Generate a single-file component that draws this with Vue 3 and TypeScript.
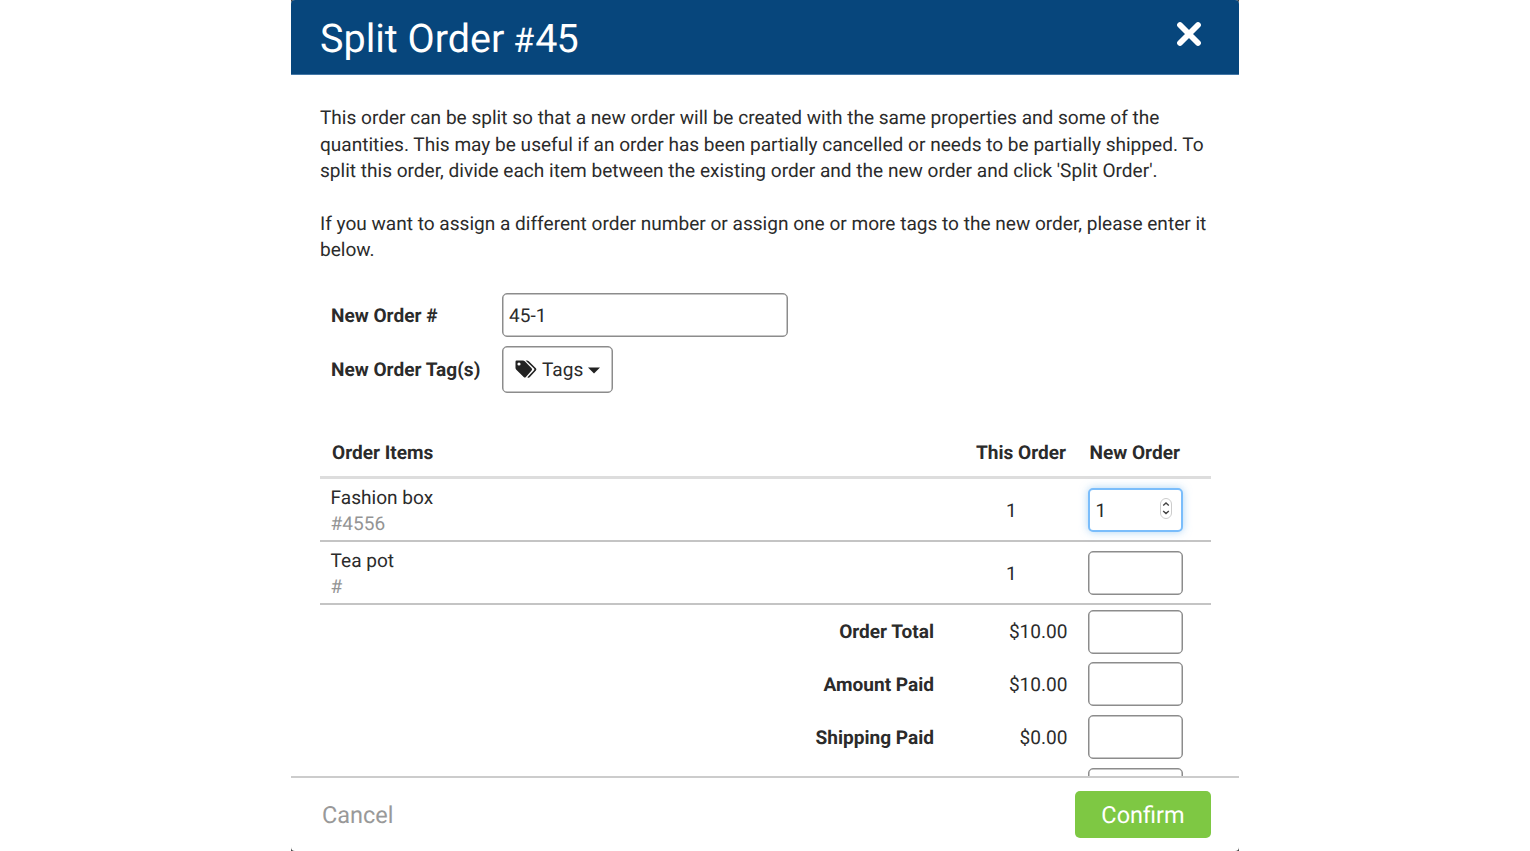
<script setup lang="ts">
import { ref } from 'vue'

interface Item {
  name: string
  sku: string
  quantity: number
}

interface Total {
  label: string
  amount: string
}

const orderNumber = ref('45-1')
const intro: string[] = [
  'This order can be split so that a new order will be created with the same properties and some of the',
  'quantities. This may be useful if an order has been partially cancelled or needs to be partially shipped. To',
  "split this order, divide each item between the existing order and the new order and click 'Split Order'.",
]
const hint: string[] = [
  'If you want to assign a different order number or assign one or more tags to the new order, please enter it',
  'below.',
]
const items: Item[] = [
  { name: 'Fashion box', sku: '#4556', quantity: 1 },
  { name: 'Tea pot', sku: '#', quantity: 1 },
]
const newQuantities = ref<string[]>(['1', ''])
const totals: Total[] = [
  { label: 'Order Total', amount: '$10.00' },
  { label: 'Amount Paid', amount: '$10.00' },
  { label: 'Shipping Paid', amount: '$0.00' },
  { label: '', amount: '' },
]
const newTotals = ref<string[]>(['', '', '', ''])
</script>

<template>
  <div class="stage">
    <section class="modal" role="dialog" aria-labelledby="title">
      <header class="head">
        <h1 id="title">Split Order <span class="order-id"><span class="hash">#</span>45</span></h1>
        <button class="close" aria-label="Close">
          <svg width="26" height="26" viewBox="0 0 26 26">
            <path d="M4 4 L22 22 M22 4 L4 22" />
          </svg>
        </button>
      </header>

      <div class="body">
        <p><span v-for="line in intro" :key="line" class="line">{{ line }}</span></p>
        <p><span v-for="line in hint" :key="line" class="line">{{ line }}</span></p>

        <div class="form">
          <label for="number">New Order #</label>
          <input id="number" v-model="orderNumber" class="field" type="text" />
          <span class="label">New Order Tag(s)</span>
          <button class="tags">
            <svg class="tag-icon" width="22" height="19" viewBox="0 0 22 19">
              <path
                fill-rule="evenodd"
                d="M1.6 0.5 H8 Q9 0.5 9.8 1.3 L16.6 8.3 Q17.6 9.4 16.6 10.5 L10.9 17 Q9.8 18.1 8.7 17 L1.3 9.7 Q0.5 8.9 0.5 8 V1.7 Q0.5 0.5 1.6 0.5 Z M4 2.4 A1.6 1.6 0 1 0 4 5.6 A1.6 1.6 0 1 0 4 2.4 Z"
              />
              <path d="M10.6 0.5 H12 Q13 0.5 13.8 1.3 L20.9 8.3 Q21.9 9.4 20.9 10.5 L14.9 17 Q13.7 18.3 12.4 17.2 L19 10.2 Q19.8 9.4 19 8.5 Z" />
            </svg>
            <span>Tags</span>
            <svg class="caret" width="12" height="7" viewBox="0 0 12 7"><path d="M0 0.4 H12 L6 6.6 Z" /></svg>
          </button>
        </div>

        <div class="table">
          <div class="row columns">
            <span>Order Items</span>
            <span>This Order</span>
            <span>New Order</span>
          </div>
          <div v-for="(item, i) in items" :key="item.sku" class="row item">
            <div class="product">
              <div>{{ item.name }}</div>
              <div class="sku">{{ item.sku }}</div>
            </div>
            <span class="quantity">{{ item.quantity }}</span>
            <div class="amount-field" :class="{ focused: i === 0 }">
              <input v-model="newQuantities[i]" type="text" />
              <svg v-if="i === 0" width="12" height="21" viewBox="0 0 12 21">
                <rect x="0.5" y="0.5" width="11" height="20" rx="5.5" />
                <path d="M3.2 7.6 L6 5 L8.8 7.6 M3.2 13 L6 15.6 L8.8 13" />
              </svg>
            </div>
          </div>
          <div v-for="(total, i) in totals" :key="total.label" class="total">
            <span class="total-label">{{ total.label }}</span>
            <span class="money">{{ total.amount }}</span>
            <div class="amount-field"><input v-model="newTotals[i]" type="text" /></div>
          </div>
        </div>
      </div>

      <footer class="foot">
        <button class="cancel">Cancel</button>
        <button class="confirm">Confirm</button>
      </footer>
    </section>
  </div>
</template>

<style>
body {
  margin: 0;
  overflow: hidden;
  background: #fff;
}
</style>

<style scoped>
* {
  box-sizing: border-box;
}
.stage {
  width: 948px;
  height: 851px;
  margin-left: 291px;
  background: #444;
}
.modal {
  display: flex;
  flex-direction: column;
  height: 100%;
  overflow: hidden;
  border-radius: 4px;
  background: #fff;
  color: #2b2b2b;
  font-family: Roboto, "Liberation Sans", sans-serif;
  font-size: 19.07px;
  line-height: 26.4px;
  text-rendering: geometricPrecision;
}
button,
input {
  padding: 0;
  color: inherit;
  font: inherit;
  text-rendering: inherit;
}
.head {
  display: flex;
  flex: none;
  justify-content: space-between;
  height: 75px;
  padding: 0 37px 0 29px;
  border-bottom: 1px solid #4377a6;
  background: #07467c;
  color: #fff;
}
h1 {
  margin: 0;
  font-size: 39.5px;
  font-weight: 400;
  line-height: 77px;
}
.order-id {
  margin-left: -1px;
  letter-spacing: -0.8px;
}
.hash {
  display: inline-block;
  width: 22px;
  font-size: 34px;
}
.close {
  width: 26px;
  height: 26px;
  margin-top: 21px;
  border: 0;
  background: none;
}
.close svg {
  display: block;
  fill: none;
  stroke: #fff;
  stroke-width: 5.8;
  stroke-linecap: round;
}
.body {
  flex: 1;
  min-height: 0;
  padding: 30.3px 28px 0 29px;
  overflow: hidden;
}
p {
  margin: 0 0 26.4px;
}
.line {
  display: block;
  white-space: nowrap;
}
.form {
  display: grid;
  grid-template-columns: 171px auto;
  grid-template-rows: 44px 47px;
  row-gap: 9px;
  align-items: center;
  justify-content: start;
  margin-top: 29.5px;
  padding-left: 11px;
}
label,
.label {
  padding-top: 2px;
  font-weight: 700;
}
.label {
  padding-top: 1px;
}
.field {
  width: 286px;
  height: 44px;
  padding: 1px 6px 0;
  border: 1px solid #8c8c8c;
  border-radius: 5px;
  background: #fff;
  box-shadow: inset 0 0 0 0.5px #8c8c8c;
}
.tags {
  display: flex;
  align-items: center;
  width: 111px;
  height: 47px;
  padding-left: 12px;
  border: 1px solid #8c8c8c;
  border-radius: 5px;
  background: #fff;
  box-shadow: inset 0 0 0 0.5px #8c8c8c;
}
.tags span {
  margin: 0 5px 0 5px;
  padding-top: 1px;
}
.tags svg {
  fill: #222;
}
.caret {
  margin-top: 1px;
}
.table {
  margin-top: 34px;
}
.row {
  display: grid;
  grid-template-columns: 656px 112px 123px;
  align-items: center;
}
.columns {
  height: 52px;
  padding: 2px 0 0 12px;
  grid-template-columns: 644px 113.5px 121.5px;
  border-bottom: 3px solid #ddd;
  font-weight: 700;
}
.item {
  height: 63px;
  border-bottom: 2px solid #c4c4c4;
}
.product {
  padding: 3px 0 0 10.6px;
}
.sku {
  color: #949494;
}
.quantity {
  padding: 2px 0 0 30px;
}
.amount-field {
  display: flex;
  align-items: center;
  width: 95px;
  height: 44px;
  border: 1px solid #8c8c8c;
  border-radius: 5px;
  background: #fff;
  box-shadow: inset 0 0 0 0.5px #8c8c8c;
}
.amount-field input {
  width: 69px;
  height: 40px;
  padding: 1px 0 0 5.5px;
  border: 0;
  outline: 0;
  background: none;
}
.amount-field svg {
  flex: none;
  margin: 0 0 3px 1px;
  fill: #fff;
}
.amount-field rect {
  stroke: #ccc;
}
.amount-field path {
  fill: none;
  stroke: #444;
  stroke-width: 1.4;
}
.focused {
  border: 2px solid #7abdfb;
  box-shadow: 0 0 9px rgba(102, 175, 233, 0.55);
}
.total {
  display: grid;
  grid-template-columns: 614px 133.5px 115.5px;
  align-items: center;
  height: 52.7px;
}
.total .amount-field {
  margin-left: 20.5px;
}
.total-label {
  padding-top: 2px;
  font-weight: 700;
  text-align: right;
}
.money {
  padding-top: 2px;
  text-align: right;
}
.foot {
  display: flex;
  flex: none;
  align-items: flex-start;
  justify-content: space-between;
  height: 75px;
  padding: 13px 28px 0 31px;
  border-top: 2px solid #ccc;
  font-size: 23.5px;
}
.foot button {
  height: 47px;
  padding-top: 2px;
  border: 0;
  background: none;
}
.foot .cancel {
  color: #999;
}
.foot .confirm {
  width: 136px;
  border-radius: 5px;
  background: #7ec843;
  color: #fff;
}
</style>
